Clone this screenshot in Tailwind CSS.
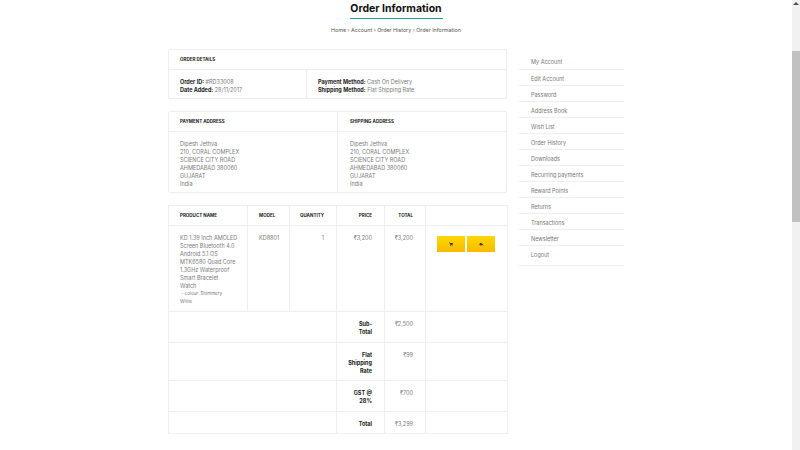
<!DOCTYPE html>
<html lang="en">
<head>
    <meta charset="UTF-8" />
    <title>Order Information</title>
    <script src="https://cdn.jsdelivr.net/npm/@tailwindcss/browser@4"></script>
</head>
<body class="h-[450px] overflow-hidden bg-white font-['Inter',sans-serif] text-[5.5px] leading-[8px] text-[#7a7a7a]">
<div class="flex h-[450px]">
    <div class="w-[792px] h-[450px] overflow-hidden">
        <div class="w-[456px] mx-auto">

            <!-- Title -->
            <div class="flex flex-col items-center">
                <h1 class="h-[19px] w-[93px] border-b border-[#1a9e96] text-center text-[10.5px] leading-[17px] font-bold text-[#111] whitespace-nowrap">Order Information</h1>
                <p class="mt-[7px] h-[23px] text-[5.35px] text-[#555]">Home › Account › Order History › Order Information</p>
            </div>

            <div class="flex gap-[12px]">
                <!-- Main column -->
                <div class="w-[339px]">

                    <!-- Order details -->
                    <div class="h-[50px] border border-[#eee] rounded-[2px]">
                        <div class="h-[20px] border-b border-[#eee] pl-[11px] pt-[6px] text-[4.5px] font-bold uppercase text-[#222]">Order Details</div>
                        <div class="flex">
                            <div class="w-[138px] h-[29px] border-r border-[#eee] pl-[11px] pt-[8px]">
                                <div><b class="text-[#222]">Order ID:</b> #RD33008</div>
                                <div><b class="text-[#222]">Date Added:</b> 28/11/2017</div>
                            </div>
                            <div class="pl-[11px] pt-[8px]">
                                <div><b class="text-[#222]">Payment Method:</b> Cash On Delivery</div>
                                <div><b class="text-[#222]">Shipping Method:</b> Flat Shipping Rate</div>
                            </div>
                        </div>
                    </div>

                    <!-- Addresses -->
                    <div class="mt-[12px] h-[82px] border border-[#eee] rounded-[2px] flex">
                        <div class="w-[169px] border-r border-[#eee]">
                            <div class="h-[20px] border-b border-[#eee] pl-[11px] pt-[6px] text-[4.5px] font-bold uppercase text-[#222]">Payment Address</div>
                            <div class="pl-[11px] pt-[8px]">Dipesh Jethva<br />210, CORAL COMPLEX<br />SCIENCE CITY ROAD<br />AHMEDABAD 380060<br />GUJARAT<br />India</div>
                        </div>
                        <div class="flex-1">
                            <div class="h-[20px] border-b border-[#eee] pl-[12px] pt-[6px] text-[4.5px] font-bold uppercase text-[#222]">Shipping Address</div>
                            <div class="pl-[12px] pt-[8px]">Dipesh Jethva<br />210, CORAL COMPLEX<br />SCIENCE CITY ROAD<br />AHMEDABAD 380060<br />GUJARAT<br />India</div>
                        </div>
                    </div>

                    <!-- Products -->
                    <table class="mt-[12px] w-[339px] table-fixed border-collapse">
                        <colgroup>
                            <col class="w-[79px]" />
                            <col class="w-[42px]" />
                            <col class="w-[47px]" />
                            <col class="w-[48px]" />
                            <col class="w-[41px]" />
                            <col class="w-[82px]" />
                        </colgroup>
                        <thead>
                            <tr class="h-[20px] text-[4.5px] font-bold uppercase text-[#222]">
                                <td class="border border-[#eee] pl-[11px]">Product Name</td>
                                <td class="border border-[#eee] pl-[11px]">Model</td>
                                <td class="border border-[#eee] pr-[12px] text-right">Quantity</td>
                                <td class="border border-[#eee] pr-[12px] text-right">Price</td>
                                <td class="border border-[#eee] pr-[12px] text-right">Total</td>
                                <td class="border border-[#eee]"></td>
                            </tr>
                        </thead>
                        <tbody>
                            <tr class="h-[86px] align-top">
                                <td class="border border-[#eee] pl-[11px] pt-[8px] whitespace-nowrap">KD 1.39 Inch AMOLED<br />Screen Bluetooth 4.0<br />Android 5.1 OS<br />MTK6580 Quad Core<br />1.3GHz Waterproof<br />Smart Bracelet<br />Watch<div class="text-[4.5px]">&nbsp;- colour: Shimmery<br />White</div></td>
                                <td class="border border-[#eee] pl-[11px] pt-[8px]">KD8801</td>
                                <td class="border border-[#eee] pr-[12px] pt-[8px] text-right">1</td>
                                <td class="border border-[#eee] pr-[12px] pt-[8px] text-right">₹3,200</td>
                                <td class="border border-[#eee] pr-[12px] pt-[8px] text-right">₹3,200</td>
                                <td class="border border-[#eee] pl-[11px] pt-[10px]">
                                    <div class="flex gap-[2px]">
                                        <button class="w-[28px] h-[16px] flex items-center justify-center bg-linear-to-b from-[#ffd800] to-[#f7b900]">
                                            <svg class="w-[4px] h-[4px]" viewBox="0 0 10 10" fill="#3a2c00"><path d="M0 1h2l.5 1.500H10L8.800 7H3L1.500 2.500H0zM3 8h2v2H3zM7 8h2v2H7z" /></svg>
                                        </button>
                                        <button class="w-[28px] h-[16px] flex items-center justify-center bg-linear-to-b from-[#ffd800] to-[#f7b900]">
                                            <svg class="w-[5px] h-[5px]" viewBox="0 0 10 10" fill="#3a2c00"><path d="M4.500 1 0 4.500 4.500 8V5.600c2 0 3.200.8 4 3 .4-3.200-1-5.500-4-5.500z" /></svg>
                                        </button>
                                    </div>
                                </td>
                            </tr>
                            <tr class="h-[31px] align-top">
                                <td colspan="3" class="border border-[#eee]"></td>
                                <td class="border border-[#eee] pl-[12px] pr-[12px] pt-[8px] text-right font-bold text-[#222]">Sub-Total</td>
                                <td class="border border-[#eee] pr-[12px] pt-[8px] text-right">₹2,500</td>
                                <td class="border border-[#eee]"></td>
                            </tr>
                            <tr class="h-[38px] align-top">
                                <td colspan="3" class="border border-[#eee]"></td>
                                <td class="border border-[#eee] pl-[8px] pr-[12px] pt-[8px] text-right font-bold text-[#222]">Flat Shipping Rate</td>
                                <td class="border border-[#eee] pr-[12px] pt-[8px] text-right">₹99</td>
                                <td class="border border-[#eee]"></td>
                            </tr>
                            <tr class="h-[31px] align-top">
                                <td colspan="3" class="border border-[#eee]"></td>
                                <td class="border border-[#eee] pl-[12px] pr-[12px] pt-[8px] text-right font-bold text-[#222]">GST @ 28%</td>
                                <td class="border border-[#eee] pr-[12px] pt-[8px] text-right">₹700</td>
                                <td class="border border-[#eee]"></td>
                            </tr>
                            <tr class="h-[22px] align-top">
                                <td colspan="3" class="border border-[#eee]"></td>
                                <td class="border border-[#eee] pr-[12px] pt-[8px] text-right font-bold text-[#222]">Total</td>
                                <td class="border border-[#eee] pr-[12px] pt-[8px] text-right">₹3,299</td>
                                <td class="border border-[#eee]"></td>
                            </tr>
                        </tbody>
                    </table>
                </div>

                <!-- Account links -->
                <ul class="w-[105px] text-[#777]">
                    <li class="h-[21px] border-b border-[#eee] pl-[12px] pt-[9px]">My Account</li>
                    <li class="h-[16px] border-b border-[#eee] pl-[12px] pt-[5px]">Edit Account</li>
                    <li class="h-[16px] border-b border-[#eee] pl-[12px] pt-[5px]">Password</li>
                    <li class="h-[16px] border-b border-[#eee] pl-[12px] pt-[5px]">Address Book</li>
                    <li class="h-[16px] border-b border-[#eee] pl-[12px] pt-[5px]">Wish List</li>
                    <li class="h-[16px] border-b border-[#eee] pl-[12px] pt-[5px]">Order History</li>
                    <li class="h-[16px] border-b border-[#eee] pl-[12px] pt-[5px]">Downloads</li>
                    <li class="h-[16px] border-b border-[#eee] pl-[12px] pt-[5px]">Recurring payments</li>
                    <li class="h-[16px] border-b border-[#eee] pl-[12px] pt-[5px]">Reward Points</li>
                    <li class="h-[16px] border-b border-[#eee] pl-[12px] pt-[5px]">Returns</li>
                    <li class="h-[16px] border-b border-[#eee] pl-[12px] pt-[5px]">Transactions</li>
                    <li class="h-[16px] border-b border-[#eee] pl-[12px] pt-[5px]">Newsletter</li>
                    <li class="h-[20px] border-b border-[#eee] pl-[12px] pt-[5px]">Logout</li>
                </ul>
            </div>
        </div>
    </div>

    <!-- Scrollbar -->
    <div class="w-[8px] h-[450px] bg-[#f1f1f1]">
        <svg class="w-[8px] h-[8px]" viewBox="0 0 8 8" fill="#505050"><path d="M4 2 7 5H1z" /></svg>
        <div class="mt-[43px] h-[171px] bg-[#c1c1c1]"></div>
    </div>
</div>
</body>
</html>
